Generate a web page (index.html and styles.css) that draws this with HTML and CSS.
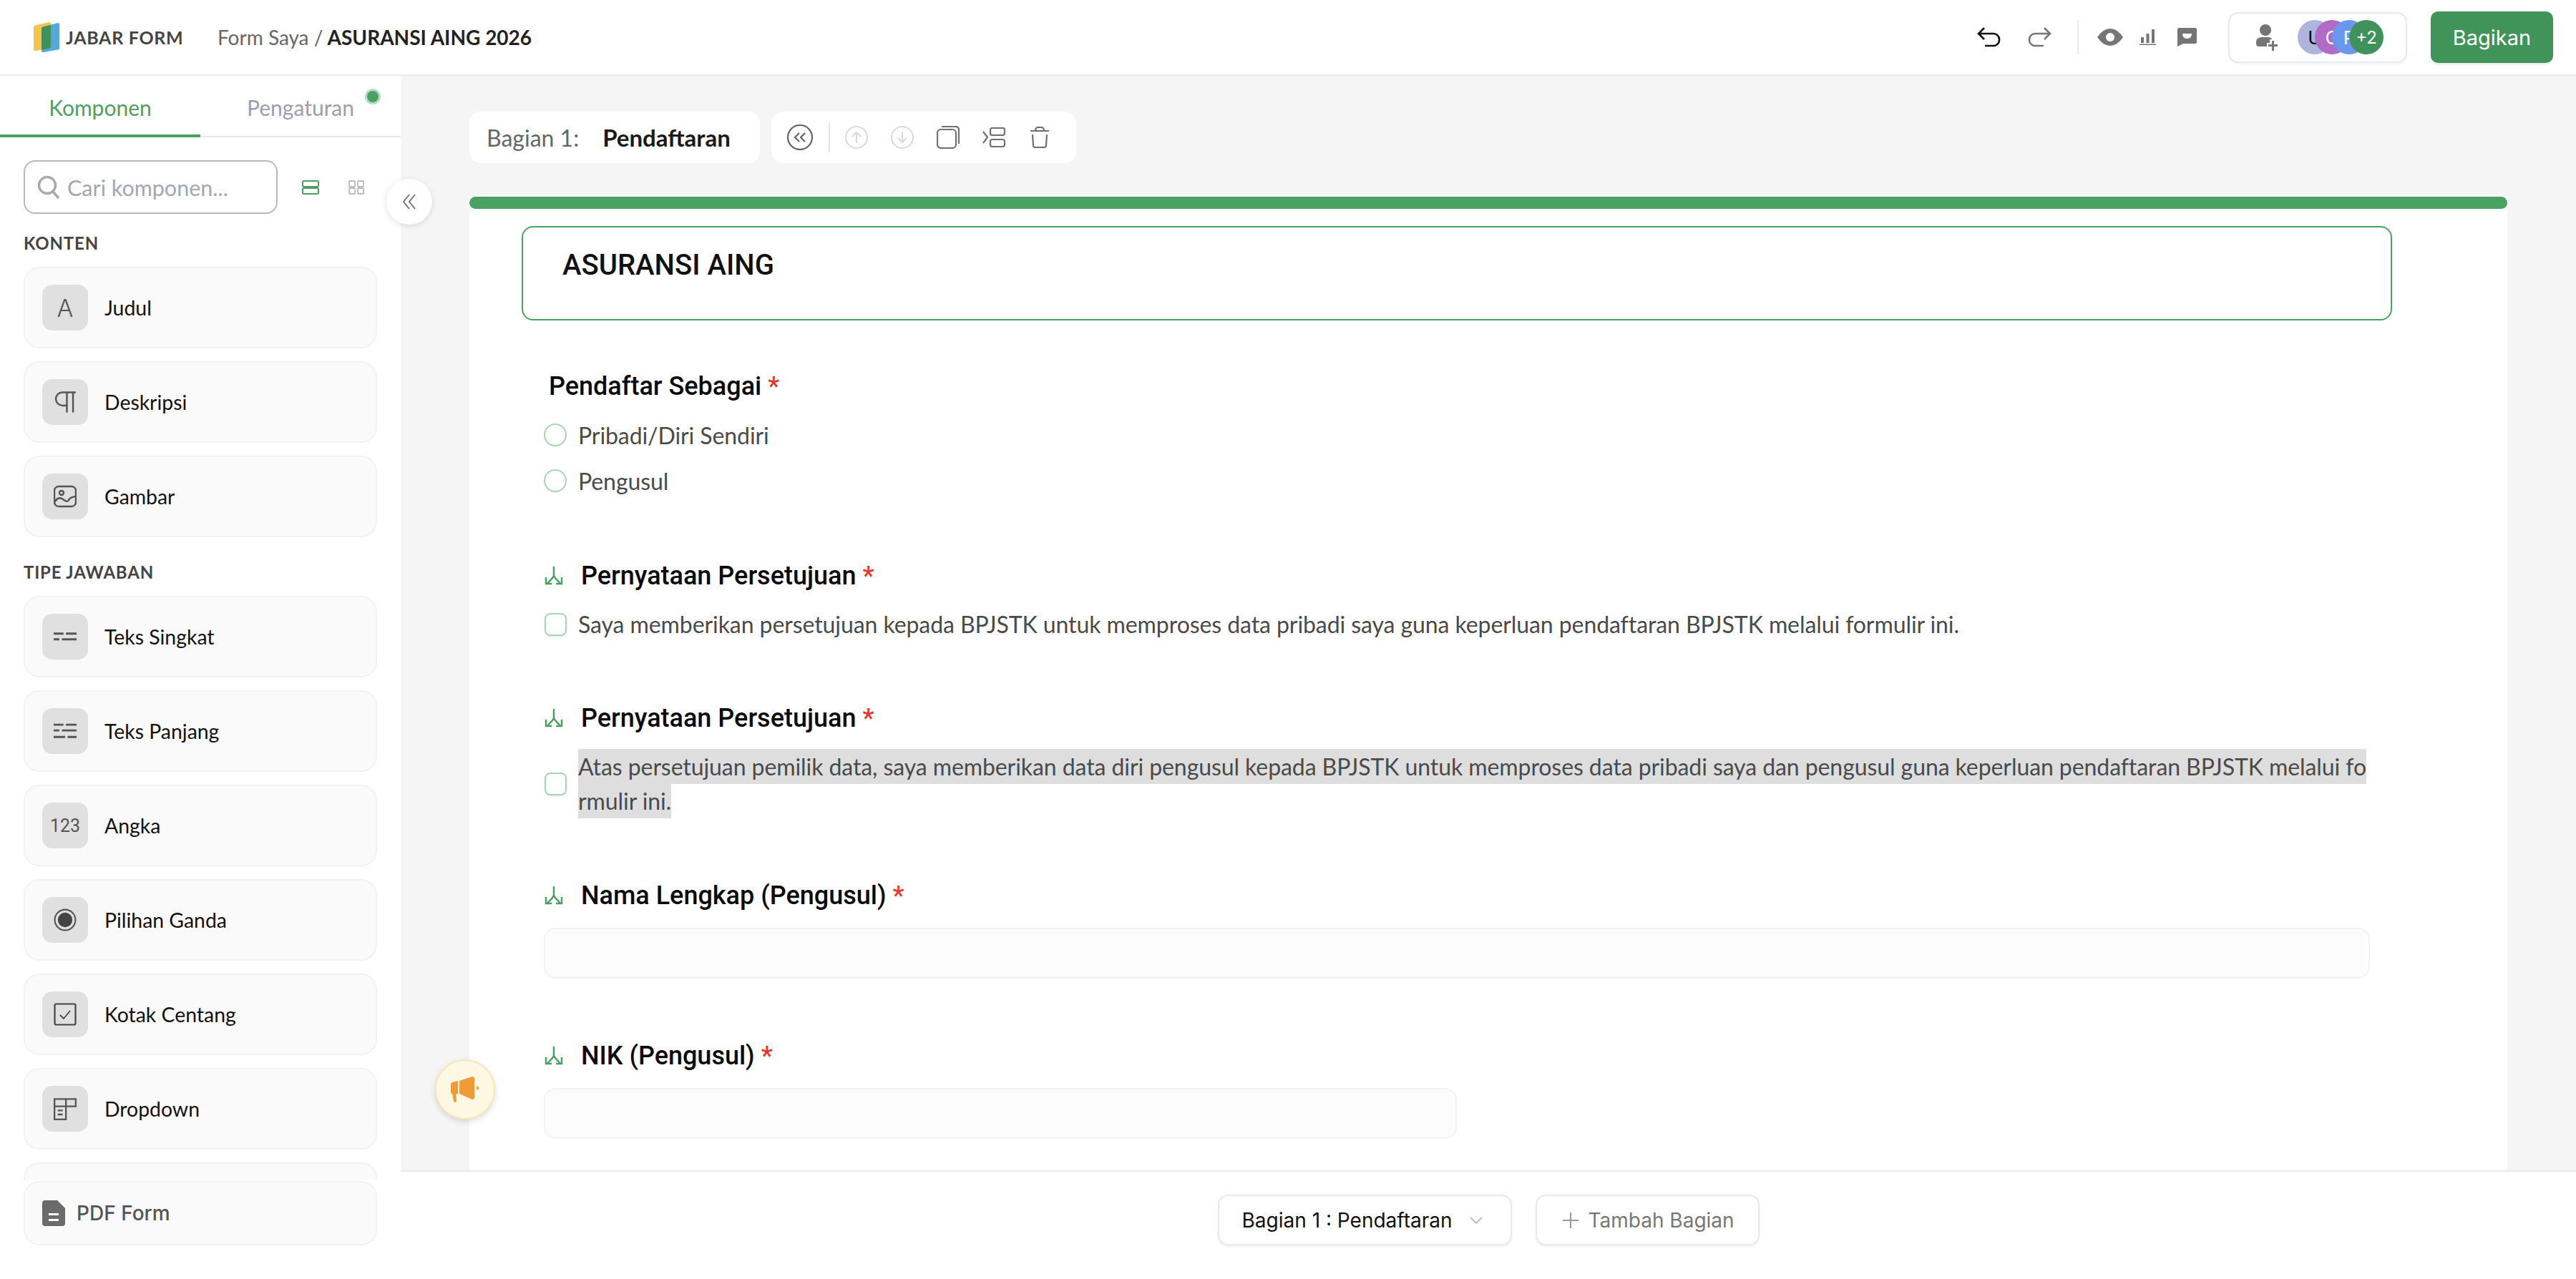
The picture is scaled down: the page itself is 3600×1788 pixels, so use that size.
FILE: index.html
```html
<!DOCTYPE html>
<html lang="id">
<head>
    <meta charset="UTF-8">
    <title>Jabar Form</title>
    <link rel="stylesheet" href="styles.css">
</head>
<body>
    <header class="topbar">
        <div class="brand">
            <svg class="brand-logo" viewBox="0 0 36 42">
                <path d="M0 7q0-2 2-2.500L22 0q2 0 2 2v32q0 2-2 2.500L3 40q-3 .5-3-2z" fill="#f4c44e"/>
                <path d="M11 9q0-2 2-2.500L34 1q2 0 2 2v33q0 2-2 2.500L14 42q-3 .5-3-2z" fill="#54a8dc"/>
                <path d="M11 9q0-2 2-2.500L24 4v30q0 2-2 2.500L11 39z" fill="#3f9259"/>
            </svg>
            <span class="brand-name">JABAR FORM</span>
        </div>
        <div class="crumbs">Form Saya <span class="crumb-sep">/</span> <b>ASURANSI AING 2026</b></div>
        <div class="top-actions">
            <svg class="ic-undo" viewBox="0 0 34 28" fill="none" stroke="#111" stroke-width="2.600"><path d="M11 1 3 9l8 8M3 9h21a8 8 0 0 1 8 8v1a8 8 0 0 1-8 8H12"/></svg>
            <svg class="ic-redo" viewBox="0 0 34 28" fill="none" stroke="#777" stroke-width="2.600"><path d="M23 1l8 8-8 8M31 9H10a8 8 0 0 0-8 8v1a8 8 0 0 0 8 8h12"/></svg>
            <span class="top-sep"></span>
            <svg class="ic-eye" viewBox="0 0 36 24"><path d="M0 12Q8 0 18 0t18 12Q28 24 18 24T0 12z" fill="#757575"/><circle cx="18" cy="12" r="6" fill="#fff"/></svg>
            <svg class="ic-bars" viewBox="0 0 23 22" fill="#757575"><path d="M0 22h23v-1.500H0zM2 19h4V11H2zM9.500 19h4V6h-4zM17 19h4V0h-4z"/></svg>
            <svg class="ic-chat" viewBox="0 0 27 26"><path d="M2 0h23q2 0 2 2v18q0 2-2 2H8l-8 4V2q0-2 2-2z" fill="#757575"/><path d="M7 8h13q0 7-6.500 7T7 8z" fill="#fff"/></svg>
            <div class="share-box">
                <svg class="ic-person" viewBox="0 0 30 37" fill="#757575"><circle cx="13" cy="8" r="8"/><path d="M0 25q0-7 8-7h9q3 0 5 2v1h-3v5h-4v5H4q-4 0-4-4z"/><path d="M22 23h3v5h5v3h-5v6h-3v-6h-5v-3h5z"/></svg>
                <div class="avatars">
                    <span class="avatar av-u">U</span>
                    <span class="avatar av-c">C</span>
                    <span class="avatar av-p">P</span>
                    <span class="avatar av-n">+2</span>
                </div>
            </div>
            <button class="share-btn">Bagikan</button>
        </div>
    </header>

    <div class="workspace">
        <aside class="sidebar">
            <div class="tabs">
                <div class="tab tab-active">Komponen</div>
                <div class="tab">Pengaturan<span class="tab-dot"></span></div>
            </div>
            <div class="side-scroll">
                <div class="search-row">
                    <div class="search-box">
                        <svg class="ic-search" viewBox="0 0 32 34" fill="none" stroke="#aaa" stroke-width="3.500"><circle cx="14" cy="14" r="11.500"/><path d="M22 23l8 9"/></svg>
                        <span>Cari komponen...</span>
                    </div>
                    <svg class="ic-view" viewBox="0 0 24 20" fill="none" stroke="#4ba163" stroke-width="2"><rect x="1" y="1" width="22" height="8" rx="1.500"/><rect x="1" y="11" width="22" height="8" rx="1.500"/></svg>
                    <svg class="ic-view ic-view-grid" viewBox="0 0 22 20" fill="none" stroke="#bbb" stroke-width="1.800"><rect x="1" y="1" width="8" height="8" rx="1"/><rect x="13" y="1" width="8" height="8" rx="1"/><rect x="1" y="11" width="8" height="8" rx="1"/><rect x="13" y="11" width="8" height="8" rx="1"/></svg>
                </div>
                <div class="side-label">KONTEN</div>
                <div class="comp-list">
                    <div class="comp"><span class="comp-ic comp-ic-a">A</span>Judul</div>
                    <div class="comp"><span class="comp-ic"><svg viewBox="0 0 26 26" fill="none" stroke="#555" stroke-width="2"><path d="M25 2H10a7.500 7.500 0 0 0 0 15h5M15 2v23M22 2v23"/></svg></span>Deskripsi</div>
                    <div class="comp"><span class="comp-ic"><svg viewBox="0 0 32 32" fill="none" stroke="#555" stroke-width="2.400"><rect x="1" y="2" width="30" height="28" rx="6"/><circle cx="11" cy="11" r="3"/><path d="M1 24q6-9 12-4t8 1 10-5"/></svg></span>Gambar</div>
                </div>
                <div class="side-label side-label-next">TIPE JAWABAN</div>
                <div class="comp-list">
                    <div class="comp"><span class="comp-ic"><svg viewBox="0 0 28 12" fill="#555"><path d="M0 1h12v2.500H0zM15 1h13v2.500H15zM0 8h7v2.500H0zM10 8h18v2.500H10z"/></svg></span>Teks Singkat</div>
                    <div class="comp"><span class="comp-ic"><svg viewBox="0 0 28 20" fill="#555"><path d="M0 1h12v2.500H0zM15 1h13v2.500H15zM0 8h7v2.500H0zM10 8h18v2.500H10zM0 16h14v2.500H0zM17 16h11v2.500H17z"/></svg></span>Teks Panjang</div>
                    <div class="comp"><span class="comp-ic comp-ic-num">123</span>Angka</div>
                    <div class="comp"><span class="comp-ic"><svg viewBox="0 0 30 30"><circle cx="15" cy="15" r="13.500" fill="none" stroke="#555" stroke-width="2"/><circle cx="15" cy="15" r="9.500" fill="#444"/></svg></span>Pilihan Ganda</div>
                    <div class="comp"><span class="comp-ic"><svg viewBox="0 0 32 32" fill="none" stroke="#444" stroke-width="2.200"><rect x="1.500" y="1.500" width="29" height="29" rx="2"/><path d="M9 17l5 5 9-11" stroke-width="1.800"/></svg></span>Kotak Centang</div>
                    <div class="comp"><span class="comp-ic"><svg viewBox="0 0 28 28" fill="none" stroke="#555" stroke-width="2"><path d="M1 2h26v9H15v16H1zM15 2v9M1 11h14M5 16h6M5 21h6"/></svg></span>Dropdown</div>
                    <div class="comp"></div>
                </div>
            </div>
            <div class="side-foot">
                <div class="pdf-card">
                    <svg class="ic-pdf" viewBox="0 0 32 36"><path d="M4 0h17l11 11v21q0 4-4 4H4q-4 0-4-4V4q0-4 4-4z" fill="#6b6b6b"/><path d="M9 18h14v3H9zM9 26h14v3H9z" fill="#fff"/></svg>
                    PDF Form
                </div>
            </div>
        </aside>

        <main class="main">
            <div class="canvas">
                <div class="section-row">
                    <div class="section-chip">
                        <span class="section-no">Bagian 1:</span>
                        <b>Pendaftaran</b>
                    </div>
                    <div class="section-tools">
                        <svg class="tool-big" viewBox="0 0 36 36" fill="none" stroke="#666" stroke-width="2.200"><circle cx="18" cy="18" r="17"/><path d="M17 12l-6 6 6 6M25 12l-6 6 6 6"/></svg>
                        <span class="tool-sep"></span>
                        <svg class="tool-arrow" viewBox="0 0 32 32" fill="none" stroke="#d9d9d9" stroke-width="2"><circle cx="16" cy="16" r="15"/><path d="M16 24V9M10 15l6-6 6 6"/></svg>
                        <svg class="tool-arrow tool-down" viewBox="0 0 32 32" fill="none" stroke="#d9d9d9" stroke-width="2"><circle cx="16" cy="16" r="15"/><path d="M16 8v15M10 17l6 6 6-6"/></svg>
                        <svg class="tool-copy" viewBox="0 0 32 32" fill="none" stroke="#707070" stroke-width="2.200"><rect x="1" y="5" width="26" height="26" rx="5"/><path d="M7 1h19q5 0 5 5v19"/></svg>
                        <svg class="tool-move" viewBox="0 0 32 28" fill="none" stroke="#707070" stroke-width="2.200"><rect x="11" y="1" width="20" height="10" rx="2.500"/><rect x="11" y="17" width="20" height="10" rx="2.500"/><path d="M1 6l6 8-6 8"/></svg>
                        <svg class="tool-trash" viewBox="0 0 26 30" fill="none" stroke="#707070" stroke-width="2.200"><path d="M0 6h26M7 6q0-5 4-5h4q4 0 4 5M3 11l1 15q0 3 3 3h12q3 0 3-3l1-15"/></svg>
                    </div>
                </div>

                <div class="form-sheet">
                    <div class="sheet-bar"></div>
                    <div class="title-box">ASURANSI AING</div>

                    <section class="q q-first">
                        <div class="q-title q-title-plain"><span>Pendaftar Sebagai <i>*</i></span></div>
                        <label class="opt-radio"><span class="radio"></span>Pribadi/Diri Sendiri</label>
                        <label class="opt-radio"><span class="radio"></span>Pengusul</label>
                    </section>

                    <section class="q q-second">
                        <div class="q-title">
                            <svg class="ic-branch" viewBox="0 0 26 26" fill="none" stroke="#4ba163" stroke-width="2.500"><path d="M13 0v12c0 4-5 6-9 12M13 12c0 4 5 6 9 12M2 15v9h8M24 15v9h-8"/></svg>
                            <span>Pernyataan Persetujuan <i>*</i></span>
                        </div>
                        <div class="opt-check"><span class="check"></span><span class="opt-text">Saya memberikan persetujuan kepada BPJSTK untuk memproses data pribadi saya guna keperluan pendaftaran BPJSTK melalui formulir ini.</span></div>
                    </section>

                    <section class="q q-third">
                        <div class="q-title">
                            <svg class="ic-branch" viewBox="0 0 26 26" fill="none" stroke="#4ba163" stroke-width="2.500"><path d="M13 0v12c0 4-5 6-9 12M13 12c0 4 5 6 9 12M2 15v9h8M24 15v9h-8"/></svg>
                            <span>Pernyataan Persetujuan <i>*</i></span>
                        </div>
                        <div class="opt-check"><span class="check"></span><span class="opt-text opt-text-wrap"><span class="selected">Atas persetujuan pemilik data, saya memberikan data diri pengusul kepada BPJSTK untuk memproses data pribadi saya dan pengusul guna keperluan pendaftaran BPJSTK melalui formulir ini.</span></span></div>
                    </section>

                    <section class="q">
                        <div class="q-title">
                            <svg class="ic-branch" viewBox="0 0 26 26" fill="none" stroke="#4ba163" stroke-width="2.500"><path d="M13 0v12c0 4-5 6-9 12M13 12c0 4 5 6 9 12M2 15v9h8M24 15v9h-8"/></svg>
                            <span>Nama Lengkap (Pengusul) <i>*</i></span>
                        </div>
                        <div class="field"></div>
                    </section>

                    <section class="q">
                        <div class="q-title">
                            <svg class="ic-branch" viewBox="0 0 26 26" fill="none" stroke="#4ba163" stroke-width="2.500"><path d="M13 0v12c0 4-5 6-9 12M13 12c0 4 5 6 9 12M2 15v9h8M24 15v9h-8"/></svg>
                            <span>NIK (Pengusul) <i>*</i></span>
                        </div>
                        <div class="field field-half"></div>
                    </section>
                </div>
            </div>

            <div class="bottombar">
                <div class="bottom-btn bottom-select">
                    Bagian 1 : Pendaftaran
                    <svg viewBox="0 0 18 10" fill="none" stroke="#bbb" stroke-width="1.800"><path d="M1 1l8 8 8-8"/></svg>
                </div>
                <div class="bottom-btn bottom-add">
                    <svg viewBox="0 0 22 22" fill="none" stroke="#999" stroke-width="2"><path d="M11 0v22M0 11h22"/></svg>
                    Tambah Bagian
                </div>
            </div>
        </main>
    </div>

    <div class="collapse-btn">
        <svg viewBox="0 0 20 24" fill="none" stroke="#777" stroke-width="2"><path d="M10 2L2 12l8 10M18 2l-8 10 8 10"/></svg>
    </div>
    <div class="announce-btn">
        <svg viewBox="0 0 40 36" fill="#f09a38"><path d="M0 11q0-2 2-3l8-2v18l-3 1 1 9q0 2-2 2t-2-2l-2-10q-2 0-2-3zM12 6l18-6q3 0 3 3v26q0 3-3 3l-18-8zM36 13l4 3-4 3z"/></svg>
    </div>
</body>
</html>
```

FILE: styles.css
```css
* {
    box-sizing: border-box;
}
html, body {
    margin: 0;
    height: 100%;
}
body {
    font-family: Lato, sans-serif;
    color: #111;
    background: #fff;
    overflow: hidden;
    position: relative;
}

/* top bar */
.topbar {
    height: 106px;
    border-bottom: 2px solid #e8e9ee;
    display: flex;
    align-items: center;
    padding: 0 32px 0 47px;
}
.brand {
    display: flex;
    align-items: center;
    width: 257px;
}
.brand-logo {
    width: 36px;
    height: 42px;
    margin-right: 9px;
}
.brand-name {
    font-size: 25px;
    font-weight: 700;
    color: #444;
    letter-spacing: 0.7px;
}
.crumbs {
    font-size: 28px;
    color: #666;
}
.crumb-sep {
    margin: 0 -1px 0 0;
}
.crumbs b {
    color: #222;
}
.top-actions {
    margin-left: auto;
    display: flex;
    align-items: center;
}
.ic-undo, .ic-redo {
    width: 34px;
    height: 28px;
}
.ic-redo {
    margin-left: 38px;
}
.top-sep {
    width: 2px;
    height: 48px;
    background: #e8e8e8;
    margin: 0 26px 0 35px;
}
.ic-eye {
    width: 36px;
    height: 24px;
}
.ic-bars {
    width: 23px;
    height: 22px;
    margin-left: 23px;
}
.ic-chat {
    width: 27px;
    height: 26px;
    margin-left: 30px;
}
.share-box {
    width: 250px;
    height: 71px;
    margin-left: 44px;
    border: 2px solid #e6e9f0;
    border-radius: 14px;
    display: flex;
    align-items: center;
    padding-left: 37px;
    box-shadow: 0 2px 3px rgba(40, 60, 100, 0.06);
}
.ic-person {
    width: 30px;
    height: 37px;
    margin-right: 28px;
}
.avatars {
    display: flex;
}
.avatar {
    width: 48px;
    height: 48px;
    border-radius: 50%;
    display: flex;
    align-items: center;
    justify-content: center;
    font-family: Inter, sans-serif;
    font-size: 26px;
    color: #fff;
    margin-right: -24px;
}
.av-u { background: #aeb4dc; color: #000; }
.av-c { background: #b06bc6; }
.av-p { background: #6a97ee; }
.av-n { background: #3f935a; font-size: 24px; }
.share-btn {
    width: 171px;
    height: 72px;
    margin-left: 33px;
    border: 0;
    border-radius: 10px;
    background: #419459;
    color: #fff;
    font-family: Inter, sans-serif;
    font-size: 29px;
    box-shadow: 0 2px 4px rgba(0, 0, 0, 0.1);
}

/* layout */
.workspace {
    display: flex;
    height: calc(100% - 106px);
}

/* sidebar */
.sidebar {
    width: 560px;
    flex: none;
    display: flex;
    flex-direction: column;
    background: #fff;
}
.tabs {
    display: flex;
    height: 86px;
    border-bottom: 2px solid #e8e9ee;
}
.tab {
    flex: 1;
    height: 86px;
    font-size: 30px;
    color: #9a9fad;
    display: flex;
    align-items: center;
    justify-content: center;
    padding-top: 2px;
    position: relative;
}
.tab-active {
    color: #4ba163;
    border-bottom: 4px solid #4ba163;
    padding-top: 6px;
}
.tab-dot {
    position: absolute;
    left: 230px;
    top: 18px;
    width: 22px;
    height: 22px;
    border-radius: 50%;
    background: #4ba163;
    border: 3px solid #b5dcc0;
}
.side-scroll {
    flex: 1;
    overflow: hidden;
    padding: 32px 33px 0;
}
.search-row {
    display: flex;
    align-items: center;
    height: 75px;
}
.search-box {
    width: 355px;
    height: 75px;
    border: 2px solid #b8b8b8;
    border-radius: 16px;
    display: flex;
    align-items: center;
    padding-left: 17px;
    font-size: 30.500px;
    color: #a3a7b3;
}
.ic-search {
    width: 32px;
    height: 34px;
    margin-right: 10px;
}
.ic-view {
    width: 24px;
    height: 20px;
    margin-left: 34px;
}
.ic-view-grid {
    width: 22px;
    margin-left: 41px;
}
.side-label {
    font-size: 24px;
    font-weight: 700;
    color: #444;
    letter-spacing: 0.8px;
    line-height: 36px;
    margin: 23px 0 15px;
}
.side-label-next {
    margin-top: 31px;
}
.comp-list {
    display: flex;
    flex-direction: column;
    gap: 18px;
}
.comp {
    height: 114px;
    flex: none;
    background: #fafafa;
    border: 2px solid #f2f2f2;
    border-radius: 22px;
    display: flex;
    align-items: center;
    padding-left: 24px;
    font-size: 28.400px;
    color: #111;
}
.comp-ic {
    width: 64px;
    height: 64px;
    margin-right: 23px;
    border-radius: 14px;
    background: #e0e0e0;
    display: flex;
    align-items: center;
    justify-content: center;
    color: #555;
}
.comp-ic svg {
    width: 32px;
    height: 32px;
}
.comp-ic-a {
    font-family: Inter, sans-serif;
    font-weight: 300;
    font-size: 34px;
}
.comp-ic-num {
    font-family: Roboto, sans-serif;
    font-size: 25px;
}
.side-foot {
    flex: none;
    height: 138px;
    padding: 1px 33px 0;
}
.pdf-card {
    height: 90px;
    background: #fafafa;
    border: 2px solid #f2f2f2;
    border-radius: 22px;
    display: flex;
    align-items: center;
    padding-left: 24px;
    font-family: Inter, sans-serif;
    font-weight: 500;
    font-size: 28px;
    color: #555;
}
.ic-pdf {
    width: 32px;
    height: 36px;
    margin-right: 16px;
}
.collapse-btn {
    position: absolute;
    left: 540px;
    top: 250px;
    width: 64px;
    height: 64px;
    border-radius: 50%;
    background: #fff;
    box-shadow: 0 2px 8px rgba(0, 0, 0, 0.12);
    display: flex;
    align-items: center;
    justify-content: center;
}
.collapse-btn svg {
    width: 20px;
    height: 24px;
}
.announce-btn {
    position: absolute;
    left: 608px;
    top: 1481px;
    width: 84px;
    height: 84px;
    border-radius: 50%;
    background: #fdf8e4;
    border: 2px solid #f6e9b4;
    box-shadow: 0 3px 8px rgba(0, 0, 0, 0.14);
    display: flex;
    align-items: center;
    justify-content: center;
}
.announce-btn svg {
    width: 40px;
    height: 36px;
}

/* canvas */
.main {
    flex: 1;
    min-width: 0;
    display: flex;
    flex-direction: column;
}
.canvas {
    flex: 1;
    overflow: hidden;
    background: #f5f5f5;
    padding: 50px 96px 0;
}
.section-row {
    display: flex;
    gap: 16px;
    height: 72px;
}
.section-chip {
    width: 406px;
    background: #fff;
    border-radius: 16px;
    display: flex;
    align-items: center;
    padding-left: 24px;
    font-size: 32px;
}
.section-no {
    color: #666;
    margin-right: 33px;
}
.section-chip b {
    font-weight: 700;
    font-size: 33px;
    color: #1a1a1a;
}
.section-tools {
    width: 426px;
    background: #fff;
    border-radius: 16px;
    display: flex;
    align-items: center;
    padding-left: 22px;
}
.tool-big {
    width: 36px;
    height: 36px;
}
.tool-sep {
    width: 2px;
    height: 40px;
    background: #e4e4e4;
    margin: 0 21px 0 22px;
}
.tool-arrow {
    width: 32px;
    height: 32px;
}
.tool-down {
    margin-left: 32px;
}
.tool-copy {
    width: 32px;
    height: 32px;
    margin-left: 32px;
}
.tool-move {
    width: 32px;
    height: 28px;
    margin-left: 32px;
}
.tool-trash {
    width: 26px;
    height: 30px;
    margin-left: 35px;
}
.form-sheet {
    margin-top: 47px;
    background: #fff;
    padding: 41px 0 60px 73px;
    position: relative;
    min-height: 1500px;
}
.sheet-bar {
    position: absolute;
    left: 0;
    right: 0;
    top: 0;
    height: 17px;
    border-radius: 9px;
    background: #4ba163;
}
.title-box {
    width: 2614px;
    height: 132px;
    border: 2px solid #4ba163;
    border-radius: 16px;
    padding: 29px 0 0 55px;
    font-family: Roboto, sans-serif;
    font-weight: 500;
    font-size: 40px;
    line-height: 48px;
    color: #111;
}

/* questions */
.q {
    margin: 88px 0 0 31px;
}
.q-first {
    margin-top: 71px;
}
.q-second {
    margin-top: 81px;
}
.q-third {
    margin-top: 87px;
}
.q-title {
    display: flex;
    align-items: center;
    height: 40px;
    font-family: Roboto, sans-serif;
    font-weight: 500;
    font-size: 36px;
    color: #0a0a0a;
}
.q-title i {
    font-style: normal;
    color: #e5392f;
}
.q-title-plain {
    padding: 2px 0 0 7px;
    margin-bottom: 17px;
}
.ic-branch {
    width: 26px;
    height: 26px;
    margin: 0 25px 0 1px;
}
.opt-radio {
    display: flex;
    align-items: center;
    height: 64px;
    font-size: 32px;
    letter-spacing: -0.080px;
    color: #4a4a4a;
}
.radio {
    width: 32px;
    height: 32px;
    border-radius: 50%;
    border: 2px solid #a9d5b5;
    margin-right: 16px;
    box-shadow: 0 1px 2px rgba(0, 0, 0, 0.08);
}
.opt-check {
    display: flex;
    align-items: center;
    margin-top: 24px;
    font-size: 32px;
    letter-spacing: -0.080px;
    line-height: 48px;
    color: #4a4a4a;
}
.check {
    flex: none;
    width: 31px;
    height: 32px;
    margin-left: 1px;
    margin-right: 16px;
    border-radius: 8px;
    border: 2px solid #a9d5b5;
    box-shadow: 0 2px 3px rgba(0, 0, 0, 0.08);
}
.opt-text-wrap {
    width: 2504px;
    word-break: break-all;
}
.selected {
    background: #dedede;
    padding: 5px 0;
}
.field {
    width: 2552px;
    height: 71px;
    margin-top: 25px;
    background: #fcfcfc;
    border: 2px solid #f3f3f3;
    border-radius: 16px;
}
.field-half {
    width: 1276px;
}

/* bottom bar */
.bottombar {
    flex: none;
    height: 152px;
    border-top: 2px solid #e8e9ee;
    background: #fff;
    display: flex;
    justify-content: center;
    gap: 33px;
    padding: 32px 0 0;
}
.bottom-btn {
    height: 71px;
    border: 2px solid #e6e9f0;
    border-radius: 14px;
    box-shadow: 0 2px 3px rgba(40, 60, 100, 0.08);
    display: flex;
    align-items: center;
    font-family: Inter, sans-serif;
    font-size: 28px;
}
.bottom-select {
    width: 411px;
    padding-left: 32px;
    color: #111;
}
.bottom-select svg {
    width: 18px;
    height: 10px;
    margin-left: 24px;
}
.bottom-add {
    width: 313px;
    padding-left: 36px;
    color: #777;
}
.bottom-add svg {
    width: 22px;
    height: 22px;
    margin-right: 14px;
}
```
